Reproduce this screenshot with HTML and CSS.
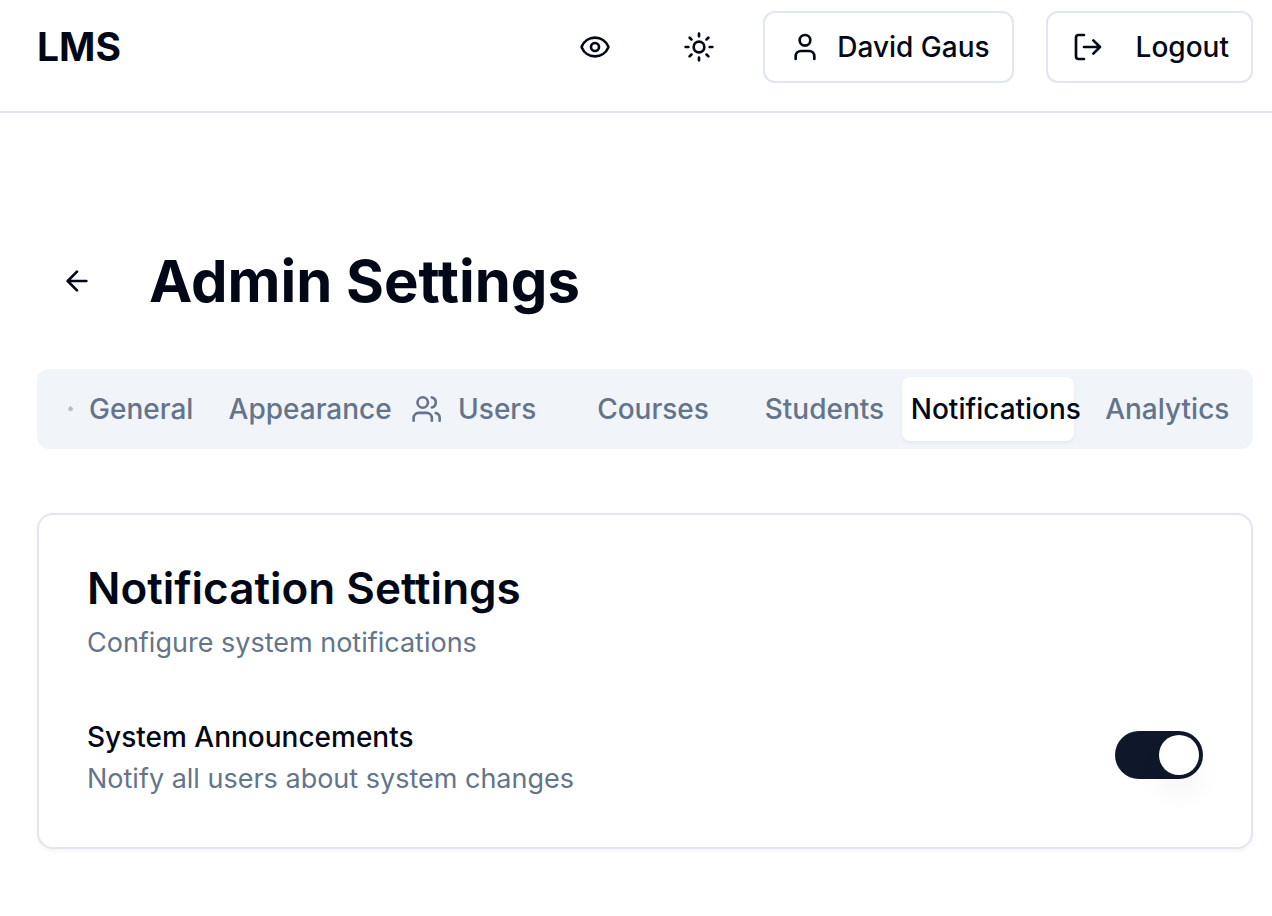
FILE: index.html
```html
<!DOCTYPE html>
<html lang="en">
<head>
<meta charset="utf-8">
<meta name="viewport" content="width=device-width, initial-scale=1">
<title>Admin Settings</title>
<link rel="stylesheet" href="styles.css">
</head>
<body>
<header class="topbar">
  <a class="brand" href="#">LMS</a>
  <div class="actions">
    <div class="action-group">
      <button class="icon-button" type="button" aria-label="Preview">
        <svg class="icon" viewBox="0 0 24 24"><path d="M2.06 12.35a1 1 0 0 1 0-.7 10.75 10.75 0 0 1 19.88 0 1 1 0 0 1 0 .7 10.75 10.75 0 0 1-19.88 0"/><circle cx="12" cy="12" r="3"/></svg>
      </button>
      <button class="icon-button" type="button" aria-label="Toggle theme">
        <svg class="icon" viewBox="0 0 24 24"><circle cx="12" cy="12" r="4"/><path d="M12 2v2M12 20v2M4.93 4.93l1.41 1.41M17.66 17.66l1.41 1.41M2 12h2M20 12h2M6.34 17.66l-1.41 1.41M19.07 4.93l-1.41 1.41"/></svg>
      </button>
      <button class="button" type="button">
        <svg class="icon" viewBox="0 0 24 24"><path d="M19 21v-2a4 4 0 0 0-4-4H9a4 4 0 0 0-4 4v2"/><circle cx="12" cy="7" r="4"/></svg>
        David Gaus
      </button>
    </div>
    <button class="button button-wide" type="button">
      <svg class="icon" viewBox="0 0 24 24"><path d="M9 21H5a2 2 0 0 1-2-2V5a2 2 0 0 1 2-2h4"/><path d="m16 17 5-5-5-5M21 12H9"/></svg>
      Logout
    </button>
  </div>
</header>
<main class="page">
  <div class="heading">
    <button class="icon-button" type="button" aria-label="Back">
      <svg class="icon" viewBox="0 0 24 24"><path d="m12 19-7-7 7-7M19 12H5"/></svg>
    </button>
    <h1 class="title">Admin Settings</h1>
  </div>
  <div class="tabs" role="tablist">
    <button class="tab" type="button" role="tab"><svg class="icon" viewBox="0 0 24 24"><path d="M12.22 2h-.44a2 2 0 0 0-2 2v.18a2 2 0 0 1-1 1.73l-.43.25a2 2 0 0 1-2 0l-.15-.08a2 2 0 0 0-2.73.73l-.22.38a2 2 0 0 0 .73 2.73l.15.1a2 2 0 0 1 1 1.72v.51a2 2 0 0 1-1 1.74l-.15.09a2 2 0 0 0-.73 2.73l.22.38a2 2 0 0 0 2.73.73l.15-.08a2 2 0 0 1 2 0l.43.25a2 2 0 0 1 1 1.73V20a2 2 0 0 0 2 2h.44a2 2 0 0 0 2-2v-.18a2 2 0 0 1 1-1.73l.43-.25a2 2 0 0 1 2 0l.15.08a2 2 0 0 0 2.73-.73l.22-.39a2 2 0 0 0-.73-2.73l-.15-.08a2 2 0 0 1-1-1.74v-.5a2 2 0 0 1 1-1.74l.15-.09a2 2 0 0 0 .73-2.73l-.22-.38a2 2 0 0 0-2.73-.73l-.15.08a2 2 0 0 1-2 0l-.43-.25a2 2 0 0 1-1-1.73V4a2 2 0 0 0-2-2z"/><circle cx="12" cy="12" r="3"/></svg>General</button>
    <button class="tab tab-plain" type="button" role="tab">Appearance</button>
    <button class="tab" type="button" role="tab"><svg class="icon" viewBox="0 0 24 24"><path d="M16 21v-2a4 4 0 0 0-4-4H6a4 4 0 0 0-4 4v2M22 21v-2a4 4 0 0 0-3-3.87M16 3.13a4 4 0 0 1 0 7.75"/><circle cx="9" cy="7" r="4"/></svg>Users</button>
    <button class="tab tab-plain" type="button" role="tab">Courses</button>
    <button class="tab tab-plain" type="button" role="tab">Students</button>
    <button class="tab tab-plain tab-active" type="button" role="tab" aria-selected="true">Notifications</button>
    <button class="tab tab-plain" type="button" role="tab">Analytics</button>
  </div>
  <section class="card">
    <h2 class="card-title">Notification Settings</h2>
    <p class="muted">Configure system notifications</p>
    <div class="setting">
      <div class="setting-text">
        <label class="setting-label" for="announcements">System Announcements</label>
        <p class="muted">Notify all users about system changes</p>
      </div>
      <input class="switch" id="announcements" type="checkbox" role="switch" checked>
    </div>
  </section>
</main>
</body>
</html>
```
FILE: styles.css
```css
*, *::before { box-sizing: border-box; }
:root {
  --ink: #020817;
  --muted: #64748b;
  --line: #e2e6f1;
  --surface: #f1f4f9;
}
body {
  margin: 0;
  background: #fff;
  color: var(--ink);
  font: 400 28px/40px Inter, "Liberation Sans", sans-serif;
}
h1, h2, p { margin: 0; }
button { font: inherit; font-weight: 500; color: inherit; cursor: pointer; }
.icon {
  width: 32px;
  height: 32px;
  fill: none;
  stroke: currentColor;
  stroke-width: 2;
  stroke-linecap: round;
  stroke-linejoin: round;
}
.topbar {
  display: flex;
  align-items: center;
  justify-content: space-between;
  padding: 7px 19px 24px 37px;
  border-bottom: 2px solid var(--line);
}
.brand { color: inherit; text-decoration: none; font-size: 39px; font-weight: 700; }
.actions { display: flex; align-items: center; gap: 32px; }
.action-group { display: flex; align-items: center; gap: 24px; }
.icon-button {
  display: flex;
  align-items: center;
  justify-content: center;
  width: 80px;
  height: 80px;
  padding: 0;
  border: 0;
  border-radius: 12px;
  background: none;
}
.button {
  display: flex;
  align-items: center;
  gap: 16px;
  height: 72px;
  padding: 0 22px 0 24px;
  border: 2px solid var(--line);
  border-radius: 12px;
  background: #fff;
  white-space: nowrap;
}
.button-wide { gap: 32px; }
.page { padding: 128px 19px 64px 37px; }
.heading { display: flex; align-items: center; gap: 32px; margin-bottom: 48px; }
.title { font-size: 58px; line-height: 72px; font-weight: 700; }
.tabs {
  display: grid;
  grid-template-columns: repeat(7, minmax(0, 1fr));
  margin-bottom: 64px;
  padding: 8px;
  border-radius: 12px;
  background: var(--surface);
  color: var(--muted);
}
.tab {
  display: flex;
  align-items: center;
  justify-content: center;
  gap: 16px;
  min-width: 0;
  padding: 12px 23px;
  border: 0;
  border-radius: 8px;
  background: none;
  white-space: nowrap;
}
.tab .icon { min-width: 0; }
.tab-plain::before { content: ""; width: 0; }
.tab-active {
  background: #fff;
  color: var(--ink);
  box-shadow: 0 2px 4px rgba(0, 0, 0, 0.05);
}
.card {
  padding: 48px;
  border: 2px solid var(--line);
  border-radius: 16px;
  background: #fff;
  box-shadow: 0 2px 4px rgba(0, 0, 0, 0.05);
}
.card-title { margin-bottom: 10px; font-size: 44px; line-height: 50px; font-weight: 600; }
.muted { color: var(--muted); font-size: 27px; }
.setting {
  display: flex;
  align-items: center;
  justify-content: space-between;
  gap: 32px;
  min-height: 88px;
  margin-top: 48px;
}
.setting-text { display: flex; flex-direction: column; align-self: flex-end; gap: 2px; }
.setting-label { font-weight: 500; }
.switch {
  appearance: none;
  flex: none;
  display: flex;
  width: 88px;
  height: 48px;
  margin: 0;
  padding: 4px;
  border-radius: 24px;
  background: #cbd5e1;
  cursor: pointer;
}
.switch::before {
  content: "";
  width: 40px;
  height: 40px;
  border-radius: 50%;
  background: #fff;
  box-shadow: 0 20px 30px 0 rgba(0, 0, 0, 0.05);
}
.switch:checked { justify-content: flex-end; background: #0f172a; }
```
